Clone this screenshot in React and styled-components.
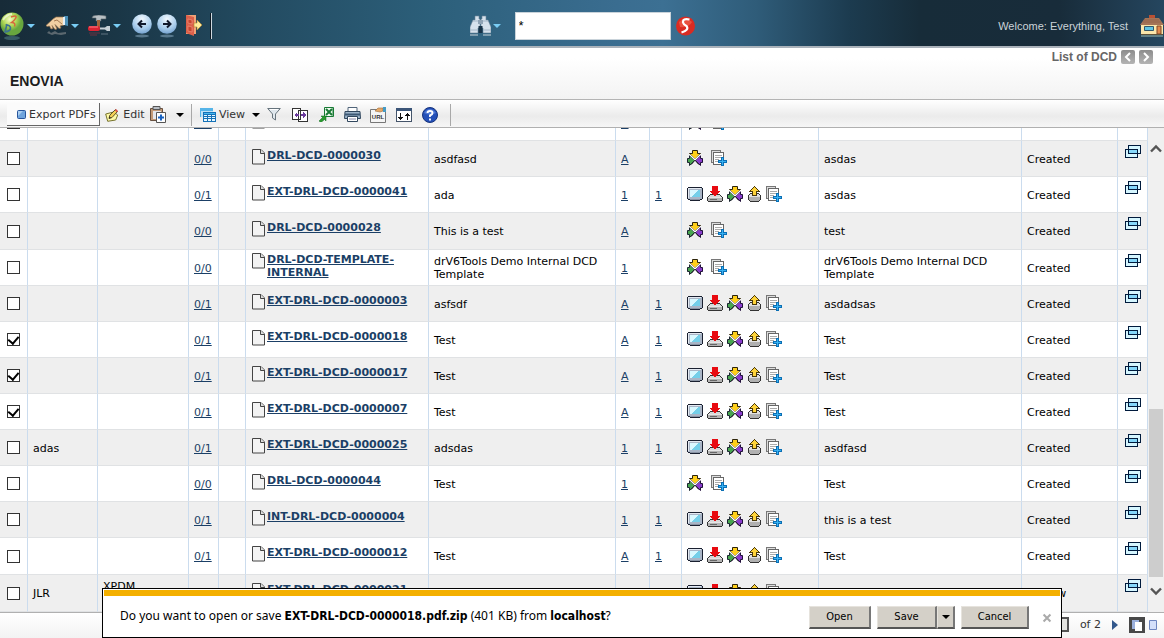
import React, { useState } from "react";
import styled, { createGlobalStyle, css } from "styled-components";

const GlobalStyle = createGlobalStyle`
  * { box-sizing: border-box; }
  html, body { margin: 0; height: 100%; }
  body { background: #fff; color: #000; font-family: "DejaVu Sans", Verdana, sans-serif; font-size: 11px; line-height: 13px; }
  #root { height: 100%; }
  button, input { font: inherit; color: inherit; }
  svg { display: block; flex: none; }
`;

const arial = `"Liberation Sans", Arial, sans-serif`;

const Page = styled.div`
  position: relative;
  display: flex;
  flex-direction: column;
  height: 100vh;
  overflow: hidden;
`;

const TopBar = styled.header`
  display: grid;
  grid-template-columns: 1fr auto 1fr;
  align-items: center;
  flex: none;
  height: 48px;
  padding-top: 6px;
  border-bottom: 2px solid #aab2ba;
  background: linear-gradient(90deg, #172b38 0%, #1a3646 10%, #234b61 22%, #2c5f7a 37%, #3a6d90 53%, #3c7093 57%, #2f5c79 65%, #1c3b4f 73%, #172c39 79%, #182c3a 91%, #25465f 100%);
`;

const TopGroup = styled.div`
  display: flex;
  align-items: center;
  justify-content: ${(p) => p.$align || "flex-start"};
  gap: ${(p) => p.$gap || 0}px;
  height: 100%;
`;

const BareButton = styled.button`
  display: flex;
  align-items: center;
  justify-content: center;
  gap: ${(p) => p.$gap || 0}px;
  padding: 0;
  border: 0;
  background: none;
`;

const MenuButton = styled(BareButton)`
  width: ${(p) => p.$width}px;
  gap: 3px;
  justify-content: ${(p) => p.$align || "flex-start"};
`;

const Caret = styled.span`
  width: 0;
  height: 0;
  margin-left: ${(p) => p.$space || 0}px;
  border: 4px solid transparent;
  border-bottom: 0;
  border-top-color: ${(p) => p.$color || "#000"};
`;

const TopDivider = styled.span`
  width: 2px;
  height: 26px;
  margin-left: 7px;
  border-left: 1px solid #0c1822;
  border-right: 1px solid #cfd8df;
`;

const SearchBox = styled.input`
  width: 156px;
  height: 28px;
  margin: 0 5px 0 14px;
  padding: 0 3px 2px;
  border: 1px solid #c9d3da;
  background: #fff;
  font-family: ${arial};
  font-size: 13px;
`;

const Welcome = styled.span`
  font: 11px/13px ${arial};
  color: #cbd3d8;
`;

const TitleArea = styled.section`
  flex: none;
  height: 52px;
  padding: 2px 11px 0 10px;
  border-bottom: 1px solid #b4b4b4;
  background: linear-gradient(#fff 20%, #f3f3f3);
`;

const PageNav = styled.nav`
  display: flex;
  align-items: center;
  justify-content: flex-end;
  gap: 4px;
  height: 14px;
  font: bold 12px/13px ${arial};
  color: #666;
`;

const NavButton = styled(BareButton)`
  width: 14px;
  height: 14px;
  border-radius: 2px;
  background: linear-gradient(#8c8c8c, #b4b4b4);
`;

const Title = styled.h1`
  margin: 9px 0 0;
  font: bold 14px/16px ${arial};
  color: #1c1c1c;
`;

const Toolbar = styled.div`
  display: flex;
  align-items: center;
  flex: none;
  height: 28px;
  padding: 2px 0 0 7px;
  border-bottom: 1px solid #b0b0b0;
  background: linear-gradient(#fff, #ebebeb 60%, #f6f6f6);
  color: #333;
`;

const ToolButton = styled(BareButton)`
  width: ${(p) => p.$width || 26}px;
  height: 23px;
  gap: ${(p) => p.$gap || 3}px;
  white-space: nowrap;
  justify-content: ${(p) => (p.$width && !p.$center ? "flex-start" : "center")};
  ${(p) => p.$raised && css`
    padding-left: 10px;
    border: solid #666;
    border-width: 0 1px 1px 0;
    background: #fbfbfb;
  `}
`;

const ToolDivider = styled.span`
  width: 1px;
  height: 22px;
  margin: 0 ${(p) => p.$right || 0}px 0 7px;
  background: #a8a8a8;
`;

const Body = styled.main`
  display: flex;
  flex: 1;
  min-height: 0;
  border-bottom: 1px solid #b0b0b0;
`;

const TableView = styled.div`
  display: flex;
  flex-direction: column;
  justify-content: flex-end;
  flex: 1;
  min-width: 0;
  overflow: hidden;
`;

const Table = styled.table`
  flex: none;
  width: 100%;
  table-layout: fixed;
  border-collapse: separate;
  border-spacing: 0;
`;

const Row = styled.tr`
  height: ${(p) => (p.$tall ? 37 : 36)}px;
  background: ${(p) => (p.$shaded ? "#efefef" : "#fff")};
`;

const Cell = styled.td`
  padding: 0 5px;
  border-right: 1px solid #cbdcee;
  border-bottom: 1px solid #e0e2e4;
  vertical-align: middle;
`;

const CheckCell = styled(Cell)`padding: 0 0 0 7px;`;
const IconCell = styled(Cell)`padding-bottom: 2px;`;
const NameCell = styled(Cell)`padding: 0 5px 4px 6px;`;
const WindowCell = styled(Cell)`
  padding: 4px 0 0 7px;
  vertical-align: top;
`;
const TextCell = styled(Cell)`
  vertical-align: ${(p) => (p.$top ? "top" : "middle")};
  padding-top: ${(p) => (p.$top ? 5 : 1)}px;
`;

const Check = styled.input`
  appearance: none;
  display: flex;
  justify-content: center;
  width: 13px;
  height: 13px;
  margin: 0;
  border: 1px solid #333;
  background: #fff;
  &:checked::after {
    content: "";
    width: 5px;
    height: 8px;
    border: solid #000;
    border-width: 0 2px 2px 0;
    transform: rotate(40deg);
  }
`;

const Link = styled.a`
  color: #1b3f66;
  text-decoration: underline;
`;

const NameWrap = styled.div`
  display: flex;
  align-items: flex-start;
  gap: 2px;
  font-weight: bold;
`;

const IconRow = styled.div`
  display: flex;
  align-items: center;
  gap: ${(p) => (p.$wide ? 8 : 4)}px;
`;

const Scrollbar = styled.div`
  display: flex;
  flex-direction: column;
  align-items: center;
  flex: none;
  width: 16px;
  padding: 14px 0;
  background: #f0f0f0;
`;

const Track = styled.div`
  display: flex;
  flex-direction: column;
  justify-content: flex-end;
  flex: 1;
  width: 100%;
  padding: 0 1px 7px;
`;

const Thumb = styled.div`
  height: 40%;
  background: #cdcdcd;
`;

const Footer = styled.footer`
  display: flex;
  align-items: center;
  justify-content: flex-end;
  flex: none;
  gap: 11px;
  height: 25px;
  padding: 0 6px 2px 0;
  background: linear-gradient(#fff, #f3f3f3);
  color: #333;
`;

const PageInput = styled.input`
  width: 30px;
  height: 15px;
  border: 2px solid #555;
  background: #e4e4e0;
`;

const FooterIcons = styled.div`
  display: flex;
  align-items: center;
  gap: 4px;
`;

const ModeButton = styled(BareButton)`
  width: ${(p) => (p.$active ? 16 : 9)}px;
  height: 16px;
  background: ${(p) => (p.$active ? "#484848" : "none")};
`;

const DownloadBar = styled.section`
  position: absolute;
  left: 102px;
  right: 102px;
  bottom: 0;
  display: flex;
  align-items: center;
  height: 50px;
  padding: 9px 8px 0 17px;
  border: 1px solid #000;
  background: #fff;
  font: 12px/16px "Noto Sans", "Segoe UI", Tahoma, sans-serif;
  &::before {
    content: "";
    position: absolute;
    inset: 1px 1px auto;
    height: 6px;
    background: #f4b000;
  }
`;

const Message = styled.p`
  flex: 1;
  margin: 0;
  padding-bottom: 3px;
  white-space: nowrap;
`;

const Strong = styled.b`
  font-family: "DejaVu Sans Condensed", Tahoma, sans-serif;
`;

const BarButtons = styled.div`
  display: flex;
  gap: 6px;
`;

const SplitButton = styled.div`display: flex;`;

const BarButton = styled.button`
  display: flex;
  align-items: center;
  justify-content: center;
  width: ${(p) => p.$width}px;
  height: 23px;
  padding: 0;
  border: solid;
  border-width: 1px 2px 2px 1px;
  border-color: #e6e3dd #777 #555 #e6e3dd;
  background: #d4d0c8;
  font: 11px/16px "DejaVu Sans Condensed", Tahoma, sans-serif;
`;

const CloseButton = styled(BareButton)`
  width: 12px;
  height: 16px;
  margin-left: 12px;
`;

/* ---------- header icons ---------- */

const Ball = () => (
  <svg width="24" height="28" viewBox="0 0 24 28">
    <defs>
      <radialGradient id="ball" cx="0.4" cy="0.3"><stop offset="0" stopColor="#f4fac4" /><stop offset="0.55" stopColor="#b4da58" /><stop offset="1" stopColor="#68a63e" /></radialGradient>
    </defs>
    <ellipse cx="12" cy="26" rx="8" ry="2" fill="#4d7a80" opacity="0.6" />
    <circle cx="12" cy="12" r="11.500" fill="url(#ball)" />
    <path d="M11 5q7-2.500 4.500 1.500q-1 2-4 4q4.500 0 3 4" fill="none" stroke="#d8663c" strokeWidth="1.400" />
    <path d="M7 12l-2 8q6-1 5.500-4.500q-1-3-5-2.500" fill="none" stroke="#3c7290" strokeWidth="1.600" />
    <path d="M3 8q4-6 9-6" stroke="#fff" fill="none" strokeWidth="2" opacity="0.6" />
  </svg>
);

const Hand = () => (
  <svg width="22" height="22" viewBox="0 0 22 22">
    <path d="M0 10.500L7 4l3-2h8v8l-4 1 1 2-2 .5-4-4 2 4.500-2 .5-3-4 1 3-2 .5-1.500-3L1 11.500z" fill="#f1cfa2" stroke="#94704c" strokeWidth="0.700" />
    <path d="M8 6l3-1 5 4" stroke="#a57a52" fill="none" />
    <path d="M18 1h4v10l-4-1z" fill="#4c91b9" /><path d="M17 2h2v8h-2z" fill="#e8eef2" />
    <path d="M1 18l2-2 2 2 4-2 3 2 8-1v2l-5 1-6-1-3 1z" fill="#7f8588" opacity="0.650" />
  </svg>
);

const Tools = () => (
  <svg width="22" height="22" viewBox="0 0 22 22">
    <path d="M5 1q5-2 13 0v3h-5v2H8V3H4z" fill="#b9c0c4" stroke="#59636a" strokeWidth="0.600" />
    <path d="M9 5h3v9H9z" fill="#a2643a" />
    <rect x="0" y="11" width="12" height="5" rx="2" fill="#dc2432" />
    <path d="M1 12h9" stroke="#ff7c85" /><path d="M12 12.500h5l2-1.500h3v5h-3l-2-1.500h-5z" fill="#c7d0d6" />
    <path d="M1 18h11M2 20h7" stroke="#92313f" opacity="0.7" /><path d="M13 19h7" stroke="#8c9ca8" opacity="0.6" />
  </svg>
);

const RoundArrow = ({ flip }) => (
  <svg width="20" height="24" viewBox="0 0 20 24">
    <defs><radialGradient id="blueball" cx="0.5" cy="0.25" r="0.8"><stop offset="0" stopColor="#f2f9ff" /><stop offset="0.6" stopColor="#a9cdec" /><stop offset="1" stopColor="#6d9ccb" /></radialGradient></defs>
    <ellipse cx="10" cy="22" rx="7" ry="1.500" fill="#7ea0b6" opacity="0.6" />
    <circle cx="10" cy="10" r="9.800" fill="url(#blueball)" />
    <path d={flip ? "M6 10h7M10 6.500l3.500 3.500-3.500 3.500" : "M14 10H7M10 6.500l-3.500 3.500 3.500 3.500"} fill="none" stroke="#10182a" strokeWidth="2" />
  </svg>
);

const Door = () => (
  <svg width="18" height="24" viewBox="0 0 18 24">
    <path d="M1 1h10v19H1z" fill="#f0a277" /><path d="M1 1l8 2v19l-8-3z" fill="#dc604a" />
    <path d="M3 5l4 1v4l-4-1zM3 12l4 1v5l-4-1z" fill="#c8432f" stroke="#f29a85" strokeWidth="0.600" />
    <path d="M9 9h3V6l5 5-5 5v-3H9z" fill="#ffeb9a" stroke="#b98b33" strokeWidth="0.700" />
  </svg>
);

const Binoculars = () => (
  <svg width="21" height="22" viewBox="0 0 21 22">
    <path d="M5 1h4v3h1v9H8v5H0v-6l3-7h2zM16 1h-4v3h-1v9h2v5h8v-6l-3-7h-2z" fill="#d5e1ec" stroke="#6c8397" strokeWidth="0.600" />
    <path d="M8 5h5v4H8z" fill="#8fa3b5" /><path d="M8.500 11h4v7h-4z" fill="#173247" />
    <path d="M0 15h8M13 15h8M3 6h5M13 6h5" stroke="#a3b6c7" />
    <path d="M0 20h8M13 20h8" stroke="#b3c4ce" strokeWidth="2" opacity="0.6" />
  </svg>
);

const SearchBall = () => (
  <svg width="19" height="22" viewBox="0 0 19 22">
    <circle cx="9.500" cy="11" r="9.500" fill="#d92b22" /><path d="M3 7q6-7 13 0q-3 6-12 5z" fill="#f36b54" opacity="0.6" />
    <path d="M13.500 4.500Q6.500 3 7 7.500q.5 2 3.500 3.500q3 4-5 6.500" fill="none" stroke="#fff" strokeWidth="2.200" />
  </svg>
);

const House = () => (
  <svg width="24" height="22" viewBox="0 0 24 22">
    <path d="M9 0h6v4H9z" fill="#b95133" /><path d="M5 3h14l5 7H0z" fill="#a57457" />
    <path d="M4 5h15M3 7h18" stroke="#8a5b43" strokeWidth="0.600" />
    <path d="M1 10h22v9H1z" fill="#fbe6aa" /><path d="M4.500 11.500h9v4h-9z" fill="#5fc3e2" stroke="#31576b" />
    <path d="M17 11h4v8h-4z" fill="#e28a4e" stroke="#7c4526" /><path d="M1 19h22v1H1z" fill="#5e5138" /><path d="M1 20h22v2H1z" fill="#7c9a98" opacity="0.7" />
  </svg>
);

/* ---------- toolbar icons ---------- */

const Bullet = () => (
  <svg width="9" height="9" viewBox="0 0 9 9"><rect x="0.500" y="0.500" width="8" height="8" rx="1" fill="#6fa4dd" stroke="#27549b" /><path d="M1 1h5l-5 5z" fill="#a9cdf0" /></svg>
);

const Pencil = () => (
  <svg width="14" height="14" viewBox="0 0 14 14">
    <path d="M.7 6l8-2 4 3-2 5-8 1.300z" fill="#fffaa6" stroke="#77732e" />
    <path d="M4 10.500l.8-3.300L10.500 1.500l2 2L7 9.500z" fill="#f3cf54" stroke="#4c4220" strokeWidth="0.900" /><path d="M9.800 2.200l2 2 1.200-1.200-2-2z" fill="#dd4a4a" /><path d="M4 10.500l.6-2 1.400 1.400z" fill="#222" />
  </svg>
);

const Clipboard = () => (
  <svg width="16" height="17" viewBox="0 0 16 17">
    <path d="M.5 2.500h12v12H.5z" fill="#c49a76" stroke="#685140" /><path d="M3 .5h7v3H3z" fill="#b8bdc4" stroke="#555" />
    <path d="M3 5h8v8H3z" fill="#e5e7eb" /><path d="M6.500 6.500h9v10h-9z" fill="#fff" stroke="#555" />
    <path d="M11 8.500v6M8 11.500h6" stroke="#1761c0" strokeWidth="2" />
  </svg>
);

const ViewIcon = () => (
  <svg width="16" height="14" viewBox="0 0 16 14" shapeRendering="crispEdges">
    <path d="M0 0h13v9H0z" fill="#bfe2f6" /><path d="M0 0h13v3H0z" fill="#55b4e8" /><path d="M0 3h1v6H0z" fill="#55b4e8" />
    <path d="M3 4h13v10H3z" fill="#1572b8" /><path d="M4 7h3v1H4zM8 7h3v1H8zM12 7h3v1h-3zM4 9h3v1H4zM8 9h3v1H8zM12 9h3v1h-3zM4 11h3v2H4zM8 11h3v2H8zM12 11h3v2h-3z" fill="#e9f8ff" /><path d="M4 5h11v1H4z" fill="#46b8ef" />
  </svg>
);

const Funnel = () => (
  <svg width="14" height="13" viewBox="0 0 14 13"><path d="M.7 .5h12.600L8.500 6v6l-3-2V6z" fill="#dfe7ed" stroke="#66737c" /><path d="M3 1.500h8" stroke="#fff" /></svg>
);

const Compare = () => (
  <svg width="16" height="14" viewBox="0 0 16 14" shapeRendering="crispEdges">
    <path d="M.5 .5h8v11h-8zM6.500 2.500h9v11h-9z" fill="#fff" stroke="#333" />
    <path d="M2 7l3-3v2h2v2H5v2zM14 7l-3-3v2H9v2h2v2z" fill="#6a3a9c" />
  </svg>
);

const Excel = () => (
  <svg width="15" height="15" viewBox="0 0 15 15">
    <path d="M5.500 .5h9v9h-9z" fill="#f4fbf2" stroke="#187a35" /><path d="M7 2l6 6M13 2L7 8" stroke="#187a35" strokeWidth="2" />
    <path d="M14 1v8" stroke="#187a35" />
    <path d="M0 14l3.500-3.500L2 9h5v5l-1.500-1.500L2 15.500z" fill="#2a9a2f" stroke="#0a6a1c" strokeWidth="0.500" />
  </svg>
);

const Printer = () => (
  <svg width="17" height="15" viewBox="0 0 17 15">
    <path d="M4 .5h9V5H4z" fill="#fff" stroke="#51657a" /><path d="M1 4.500h15l.5 7H.5z" fill="#9db4ca" stroke="#31475e" />
    <path d="M1 7.500h15" stroke="#3d5874" strokeWidth="2" /><path d="M3.500 9.500h10v5h-10z" fill="#fff" stroke="#31475e" /><path d="M5 12h7" stroke="#88a" />
  </svg>
);

const UrlIcon = () => (
  <svg width="16" height="16" viewBox="0 0 16 16">
    <path d="M.5 2.500h15v13H.5z" fill="#f5f5f5" stroke="#777" /><path d="M5 4l3-3h5v3l-3 1z" fill="#e5a968" stroke="#9b6b3e" strokeWidth="0.600" /><path d="M13 0h3v5h-3z" fill="#469bc5" />
    <text x="8" y="12" textAnchor="middle" fontSize="6" fontWeight="bold" fontFamily="Liberation Sans, sans-serif" fill="#333">URL</text>
  </svg>
);

const SortIcon = () => (
  <svg width="16" height="14" viewBox="0 0 16 14" shapeRendering="crispEdges">
    <path d="M.5 .5h15v13H.5z" fill="#fff" stroke="#44546a" /><path d="M0 0h16v3H0z" fill="#3b5578" />
    <path d="M4 5h1v6H4zM11 5h1v7h-1z" fill="#111" /><path d="M2 9h5v1H2zM3 10h3v1H3zM4 11h1v1H4zM9 7h5v1H9zM10 6h3v1h-3z" fill="#111" />
  </svg>
);

const Help = () => (
  <svg width="16" height="16" viewBox="0 0 16 16">
    <circle cx="8" cy="8" r="7.500" fill="#2450b8" stroke="#16337c" /><path d="M2 6q6-8 12 0q-6 3-12 0z" fill="#6d95e8" opacity="0.6" />
    <path d="M5.500 6Q5.500 4 8 4t2.500 2Q10.500 7.500 8 8.500V10M8 11.500v2" fill="none" stroke="#fff" strokeWidth="1.900" />
  </svg>
);

/* ---------- row icons ---------- */

const FileIcon = () => (
  <svg width="13" height="16" viewBox="0 0 13 16"><path d="M.5 .5H9l3.500 3.500v11H.5z" fill="#f3f3f3" stroke="#444" /><path d="M8.500 .5V4.500h4" fill="#ddd" stroke="#444" /></svg>
);

const Monitor = () => (
  <svg width="16" height="16" viewBox="0 0 16 16" shapeRendering="crispEdges">
    <path d="M1 1h14v1h1v11h-1v1h-2v1H3v-1H1v-1H0V2h1z" fill="#1a2030" />
    <path d="M1 2h14v11H1z" fill="#a9b5c6" /><path d="M1 2h13v1H2v9H1z" fill="#e4eaf2" />
    <path d="M3 4h10v7H3z" fill="#74cfe9" /><path d="M3 4h8l-6 7H3z" fill="#d9f8ff" /><path d="M3 13h10v1H3z" fill="#8a94a4" />
  </svg>
);

const Download = () => (
  <svg width="16" height="16" viewBox="0 0 16 16" shapeRendering="crispEdges">
    <path d="M3 8h10v1h1v1h1v1h1v4h-1v1H1v-1H0v-4h1v-1h1V9h1z" fill="#333" />
    <path d="M3 9h10v1h1v1H2v-1h1z" fill="#d8d8d8" /><path d="M1 11h14v4H1z" fill="#b4b4b4" /><path d="M1 11h14v1H1z" fill="#e6e6e6" /><path d="M3 13h7v1H3z" fill="#666" />
    <path d="M5 0h6v5h2v1h-1v1h-1v1h-1v1H9v1H7V9H6V8H5V7H4V6H3V5h2z" fill="#e80a10" />
  </svg>
);

const Arrows = () => (
  <svg width="16" height="16" viewBox="0 0 16 16">
    <path d="M5.500 .5h5v3h3L8 9 2.500 3.500h3z" fill="#ffcf1a" stroke="#2c230a" />
    <path d="M.5 8.500h2V5.500L7.700 10.500 2.500 15.500v-3h-2z" fill="#48a650" stroke="#1a2430" />
    <path d="M15.500 8.500h-2V5.500L8.300 10.500l5.200 5v-3h2z" fill="#8a3ccc" stroke="#20103a" />
    <path d="M2.500 4.500L8 9.800l5.500-5.300" fill="none" stroke="#fff" strokeWidth="1.200" />
    <path d="M8 10l-3.500 4.500M8 10l3.500 4.500" fill="none" stroke="#1c1a22" strokeWidth="0.800" />
  </svg>
);

const Upload = () => (
  <svg width="15" height="16" viewBox="0 0 15 16" shapeRendering="crispEdges">
    <path d="M3 7h9v1h1v1h1v5h-1v1h-1v1H3v-1H2v-1H1V9h1V8h1z" fill="#333" />
    <path d="M3 8h9v1h1v2H2V9h1z" fill="#e2e2e2" /><path d="M2 11h11v3h-1v1H3v-1H2z" fill="#b0b0b0" />
    <path d="M7 0h1v1h1v1h1v1h1v1h1v1h1v1h-3v4H5V6H2V5h1V4h1V3h1V2h1V1h1z" fill="#4a3908" />
    <path d="M7 1h1v1h1v1h1v1h1v1H9v4H6V5H4V4h1V3h1V2h1z" fill="#ffd43a" />
  </svg>
);

const CopyAdd = () => (
  <svg width="16" height="16" viewBox="0 0 16 16" shapeRendering="crispEdges">
    <path d="M.5 .5h9v12h-9z" fill="#ddd" stroke="#777" /><path d="M2.500 2.500h10v12h-10z" fill="#fff" stroke="#666" />
    <path d="M4 5h7v1H4zM4 7h7v1H4zM4 9h4v1H4zM4 11h3v1H4z" fill="#aaa" />
    <path d="M10 7h3v3h3v3h-3v3h-3v-3H7v-3h3z" fill="#0b6fb4" /><path d="M11 8h1v3h3v1h-3v3h-1v-3H8v-1h3z" fill="#36b0f2" />
  </svg>
);

const Windows = () => (
  <svg width="16" height="13" viewBox="0 0 16 13" shapeRendering="crispEdges">
    <path d="M3.500 .5h12v8h-12z" fill="#d5f6ff" stroke="#001a3c" />
    <path d="M.5 4.500h12v8H.5z" fill="#d5f6ff" stroke="#001a3c" /><path d="M3.500 4.500h9v4h-9z" fill="#85d8fb" stroke="#001a3c" />
  </svg>
);

const Chevron = ({ d, size = 14, color = "#555", w = 2.4 }) => (
  <svg width={size} height={size} viewBox="0 0 14 14"><path d={d} fill="none" stroke={color} strokeWidth={w} /></svg>
);
const UP = "M2 9.500l5-5 5 5";
const DOWN = "M2 4.500l5 5 5-5";
const LEFT = "M9 3L5 7l4 4";
const RIGHT = "M5 3l4 4-4 4";

const PageIcon = ({ double: two }) => (
  <svg width={two ? 10 : 9} height="12" viewBox={two ? "0 0 10 12" : "0 0 9 12"}>
    {two ? <><path d="M0 1h7v9H0z" fill="#9bb0dc" /><path d="M3 3h7v9H3z" fill="#fff" /></> : <path d="M.5 1.500h7v9h-7z" fill="#d4e0fa" stroke="#6e86c0" />}
  </svg>
);

const rows = [
  { name: "EXT-DRL-DCD-0000030", ratio: "0/0", rev: "A", desc: "", text: "", state: "" },
  { name: "DRL-DCD-0000030", ratio: "0/0", rev: "A", desc: "asdfasd", text: "asdas", state: "Created" },
  { name: "EXT-DRL-DCD-0000041", ratio: "0/1", rev: "1", ver: "1", desc: "ada", text: "asdas", state: "Created" },
  { name: "DRL-DCD-0000028", ratio: "0/0", rev: "A", desc: "This is a test", text: "test", state: "Created", tall: true },
  { name: "DRL-DCD-TEMPLATE-INTERNAL", ratio: "0/0", rev: "1", desc: "drV6Tools Demo Internal DCD Template", text: "drV6Tools Demo Internal DCD Template", state: "Created" },
  { name: "EXT-DRL-DCD-0000003", ratio: "0/1", rev: "A", ver: "1", desc: "asfsdf", text: "asdadsas", state: "Created" },
  { name: "EXT-DRL-DCD-0000018", ratio: "0/1", rev: "A", ver: "1", desc: "Test", text: "Test", state: "Created", checked: true },
  { name: "EXT-DRL-DCD-0000017", ratio: "0/1", rev: "A", ver: "1", desc: "Test", text: "Test", state: "Created", checked: true },
  { name: "EXT-DRL-DCD-0000007", ratio: "0/1", rev: "A", ver: "1", desc: "Test", text: "Test", state: "Created", checked: true },
  { name: "EXT-DRL-DCD-0000025", ratio: "0/1", rev: "1", ver: "1", desc: "adsdas", text: "asdfasd", state: "Created", owner: "adas" },
  { name: "DRL-DCD-0000044", ratio: "0/0", rev: "1", desc: "Test", text: "Test", state: "Created" },
  { name: "INT-DRL-DCD-0000004", ratio: "0/1", rev: "1", ver: "1", desc: "", text: "this is a test", state: "Created" },
  { name: "EXT-DRL-DCD-0000012", ratio: "0/1", rev: "A", ver: "1", desc: "Test", text: "Test", state: "Created", tall: true },
  { name: "EXT-DRL-DCD-0000021", ratio: "", rev: "", ver: "1", desc: "", text: "", state: "Review", owner: "JLR", source: "XPDM", tall: true },
];

const columns = [28, 70, 91, 30, 27, 183, 187, 34, 32, 137, null, 96, 30];

const Num = ({ value }) => (value ? <Link href="#">{value}</Link> : null);

function DataRow({ row, index }) {
  const [checked, setChecked] = useState(!!row.checked);
  return (
    <Row $shaded={index % 2 === 1} $tall={row.tall}>
      <CheckCell><Check type="checkbox" aria-label={`Select ${row.name}`} checked={checked} onChange={() => setChecked(!checked)} /></CheckCell>
      <TextCell>{row.owner}</TextCell>
      <TextCell $top>{row.source}</TextCell>
      <TextCell><Num value={row.ratio} /></TextCell>
      <Cell />
      <NameCell><NameWrap><FileIcon /><Link href="#">{row.name}</Link></NameWrap></NameCell>
      <TextCell>{row.desc}</TextCell>
      <TextCell><Num value={row.rev} /></TextCell>
      <TextCell><Num value={row.ver} /></TextCell>
      <IconCell>
        <IconRow $wide={!row.ver}>
          {row.ver && <><Monitor /><Download /></>}
          <Arrows />
          {row.ver && <Upload />}
          <CopyAdd />
        </IconRow>
      </IconCell>
      <TextCell>{row.text}</TextCell>
      <TextCell>{row.state}</TextCell>
      <WindowCell><BareButton aria-label="Open in new window"><Windows /></BareButton></WindowCell>
    </Row>
  );
}

export default function App() {
  return (
    <Page>
      <GlobalStyle />
      <TopBar>
        <TopGroup>
          <MenuButton aria-label="Apps" $width={46}><Ball /><Caret $color="#79cdf5" /></MenuButton>
          <MenuButton aria-label="Actions" $width={42}><Hand /><Caret $color="#79cdf5" /></MenuButton>
          <MenuButton aria-label="Tools" $width={44}><Tools /><Caret $color="#79cdf5" /></MenuButton>
          <TopGroup $gap={5}>
            <BareButton aria-label="Back"><RoundArrow /></BareButton>
            <BareButton aria-label="Forward"><RoundArrow flip /></BareButton>
          </TopGroup>
          <MenuButton aria-label="Log out" $width={26} $align="flex-end"><Door /></MenuButton>
          <TopDivider />
        </TopGroup>
        <TopGroup>
          <BareButton aria-label="Search type" $gap={2}><Binoculars /><Caret $color="#79cdf5" /></BareButton>
          <SearchBox aria-label="Search" defaultValue="*" />
          <BareButton aria-label="Search"><SearchBall /></BareButton>
        </TopGroup>
        <TopGroup $align="flex-end" $gap={12}>
          <Welcome>Welcome: Everything, Test</Welcome>
          <BareButton aria-label="Home"><House /></BareButton>
        </TopGroup>
      </TopBar>
      <TitleArea>
        <PageNav>
          <span>List of DCD</span>
          <NavButton aria-label="Previous"><Chevron d={LEFT} color="#fff" w={2} /></NavButton>
          <NavButton aria-label="Next"><Chevron d={RIGHT} color="#fff" w={2} /></NavButton>
        </PageNav>
        <Title>ENOVIA</Title>
      </TitleArea>
      <Toolbar>
        <ToolButton $width={93} $raised><Bullet />Export PDFs</ToolButton>
        <ToolButton $width={50} $gap={4} $center><Pencil />Edit</ToolButton>
        <ToolButton $width={34} $gap={10} aria-label="Paste"><Clipboard /><Caret /></ToolButton>
        <ToolDivider $right={8} />
        <ToolButton $width={61}><ViewIcon />View<Caret $space={4} /></ToolButton>
        <ToolButton aria-label="Filter"><Funnel /></ToolButton>
        <ToolButton aria-label="Compare"><Compare /></ToolButton>
        <ToolButton aria-label="Export to spreadsheet"><Excel /></ToolButton>
        <ToolButton aria-label="Print"><Printer /></ToolButton>
        <ToolButton aria-label="Page link"><UrlIcon /></ToolButton>
        <ToolButton aria-label="Sort"><SortIcon /></ToolButton>
        <ToolButton aria-label="Help"><Help /></ToolButton>
        <ToolDivider />
      </Toolbar>
      <Body>
        <TableView>
          <Table>
            <colgroup>{columns.map((w, i) => <col key={i} width={w || undefined} />)}</colgroup>
            <tbody>{rows.map((row, i) => <DataRow key={i} row={row} index={i} />)}</tbody>
          </Table>
        </TableView>
        <Scrollbar aria-hidden="true">
          <Chevron d={UP} />
          <Track><Thumb /></Track>
          <Chevron d={DOWN} />
        </Scrollbar>
      </Body>
      <Footer>
        <PageInput aria-label="Page" />
        <span>of 2</span>
        <BareButton aria-label="Next page"><svg width="6" height="10" viewBox="0 0 6 10"><path d="M0 0l6 5-6 5z" fill="#33588c" /></svg></BareButton>
        <FooterIcons>
          <ModeButton aria-label="Paged view" $active><PageIcon double /></ModeButton>
          <ModeButton aria-label="Single view"><PageIcon /></ModeButton>
        </FooterIcons>
      </Footer>
      <DownloadBar role="dialog" aria-label="Download">
        <Message>Do you want to open or save <Strong>EXT-DRL-DCD-0000018.pdf.zip</Strong> (401 KB) from <Strong>localhost</Strong>?</Message>
        <BarButtons>
          <BarButton $width={62}>Open</BarButton>
          <SplitButton>
            <BarButton $width={60}>Save</BarButton>
            <BarButton $width={18} aria-label="Save options"><Caret /></BarButton>
          </SplitButton>
          <BarButton $width={68}>Cancel</BarButton>
        </BarButtons>
        <CloseButton aria-label="Close"><Chevron d="M3 3l8 8M11 3l-8 8" size={12} color="#aaa" /></CloseButton>
      </DownloadBar>
    </Page>
  );
}
